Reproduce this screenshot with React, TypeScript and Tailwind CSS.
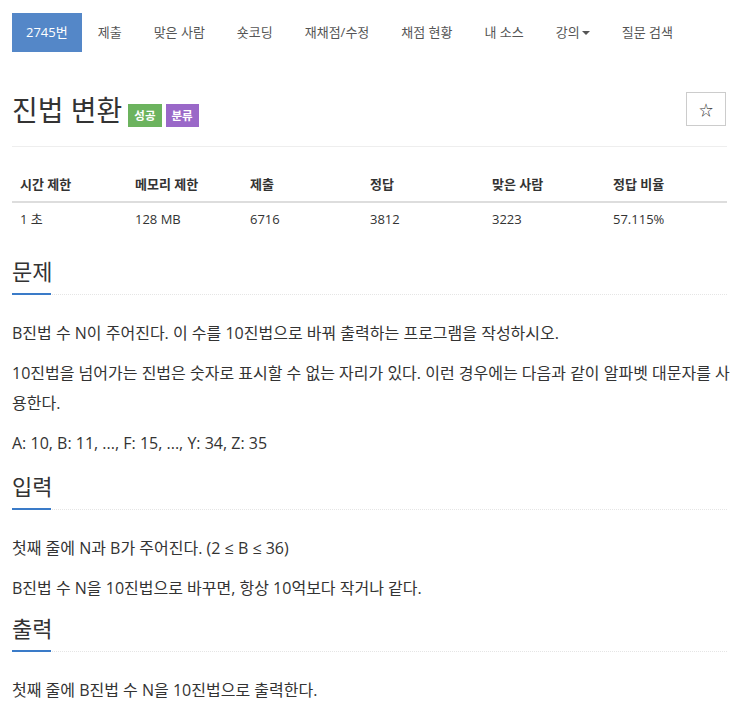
import React from "react";

const font = { fontFamily: '"Open Sans", "Noto Sans CJK KR", sans-serif' };

function Heading({ children, top }: { children: React.ReactNode; top: string }) {
  return (
    <div className={top}>
      <h2 className="text-[22px] leading-[30px] text-[#333] font-normal">{children}</h2>
      <div className="relative mt-[7px] h-[2px] border-b border-dotted border-[#e5e5e5]">
        <div className="absolute left-0 top-0 h-[2px] w-[39px] bg-[#3a7bc8]" />
      </div>
    </div>
  );
}

export default function App() {
  const navs = ["제출", "맞은 사람", "숏코딩", "재채점/수정", "채점 현황", "내 소스"];
  return (
    <div className="bg-white min-h-[707px] pl-[12px] pr-[16px] text-[#333]" style={font}>
      <nav className="pt-[13px] flex items-stretch text-[13px]">
        <div className="h-[39px] px-[14px] flex items-center bg-[#5487c8] text-white">2745번</div>
        {navs.map((n) => (
          <div key={n} className="h-[39px] px-[16px] flex items-center text-[#555]">{n}</div>
        ))}
        <div className="h-[39px] px-[16px] flex items-center text-[#555]">
          강의
          <span className="ml-[2px] inline-block w-0 h-0 border-l-[4px] border-r-[4px] border-t-[4px] border-l-transparent border-r-transparent border-t-[#555]" />
        </div>
        <div className="h-[39px] px-[16px] flex items-center text-[#555]">질문 검색</div>
      </nav>

      <div className="mt-[40px] flex items-start justify-between">
        <div className="flex items-end">
          <h1 className="text-[28px] leading-[36px] text-[#333] font-normal">진법 변환</h1>
          <span className="ml-[6px] mb-[1px] h-[23px] px-[6px] flex items-center bg-[#6cb35e] text-white text-[11.5px] font-bold">성공</span>
          <span className="ml-[4px] mb-[1px] h-[23px] px-[6px] flex items-center bg-[#9a68c8] text-white text-[11.5px] font-bold">분류</span>
        </div>
        <button className="mr-[1px] w-[40px] h-[34px] border border-[#ccc] flex items-center justify-center text-[#333] text-[14px]">☆</button>
      </div>

      <div className="mt-[18px] border-t border-[#eee]" />

      <div className="mt-[21px] text-[13px]">
        <div className="grid grid-cols-[115px_115px_120px_122px_121px_1fr] border-b-2 border-[#ddd] font-bold">
          {["시간 제한", "메모리 제한", "제출", "정답", "맞은 사람", "정답 비율"].map((h) => (
            <div key={h} className="px-[8px] h-[33px] flex items-center">{h}</div>
          ))}
        </div>
        <div className="grid grid-cols-[115px_115px_120px_122px_121px_1fr]">
          {["1 초", "128 MB", "6716", "3812", "3223", "57.115%"].map((h) => (
            <div key={h} className="px-[8px] h-[33px] flex items-center">{h}</div>
          ))}
        </div>
      </div>

      <Heading top="mt-[20px]">문제</Heading>
      <div className="mt-[23px] mr-[-8px] text-[16px] leading-[30px] text-[#333] break-all">
        <p>B진법 수 N이 주어진다. 이 수를 10진법으로 바꿔 출력하는 프로그램을 작성하시오.</p>
        <p className="mt-[10px]">10진법을 넘어가는 진법은 숫자로 표시할 수 없는 자리가 있다. 이런 경우에는 다음과 같이 알파벳 대문자를 사용한다.</p>
        <p className="mt-[10px]">A: 10, B: 11, ..., F: 15, ..., Y: 34, Z: 35</p>
      </div>

      <Heading top="mt-[13px]">입력</Heading>
      <div className="mt-[23px] text-[16px] leading-[30px] text-[#333] break-all">
        <p>첫째 줄에 N과 B가 주어진다. (2 ≤ B ≤ 36)</p>
        <p className="mt-[10px]">B진법 수 N을 10진법으로 바꾸면, 항상 10억보다 작거나 같다.</p>
      </div>

      <Heading top="mt-[10px]">출력</Heading>
      <div className="mt-[23px] text-[16px] leading-[30px] text-[#333] break-all">
        <p>첫째 줄에 B진법 수 N을 10진법으로 출력한다.</p>
      </div>
    </div>
  );
}
